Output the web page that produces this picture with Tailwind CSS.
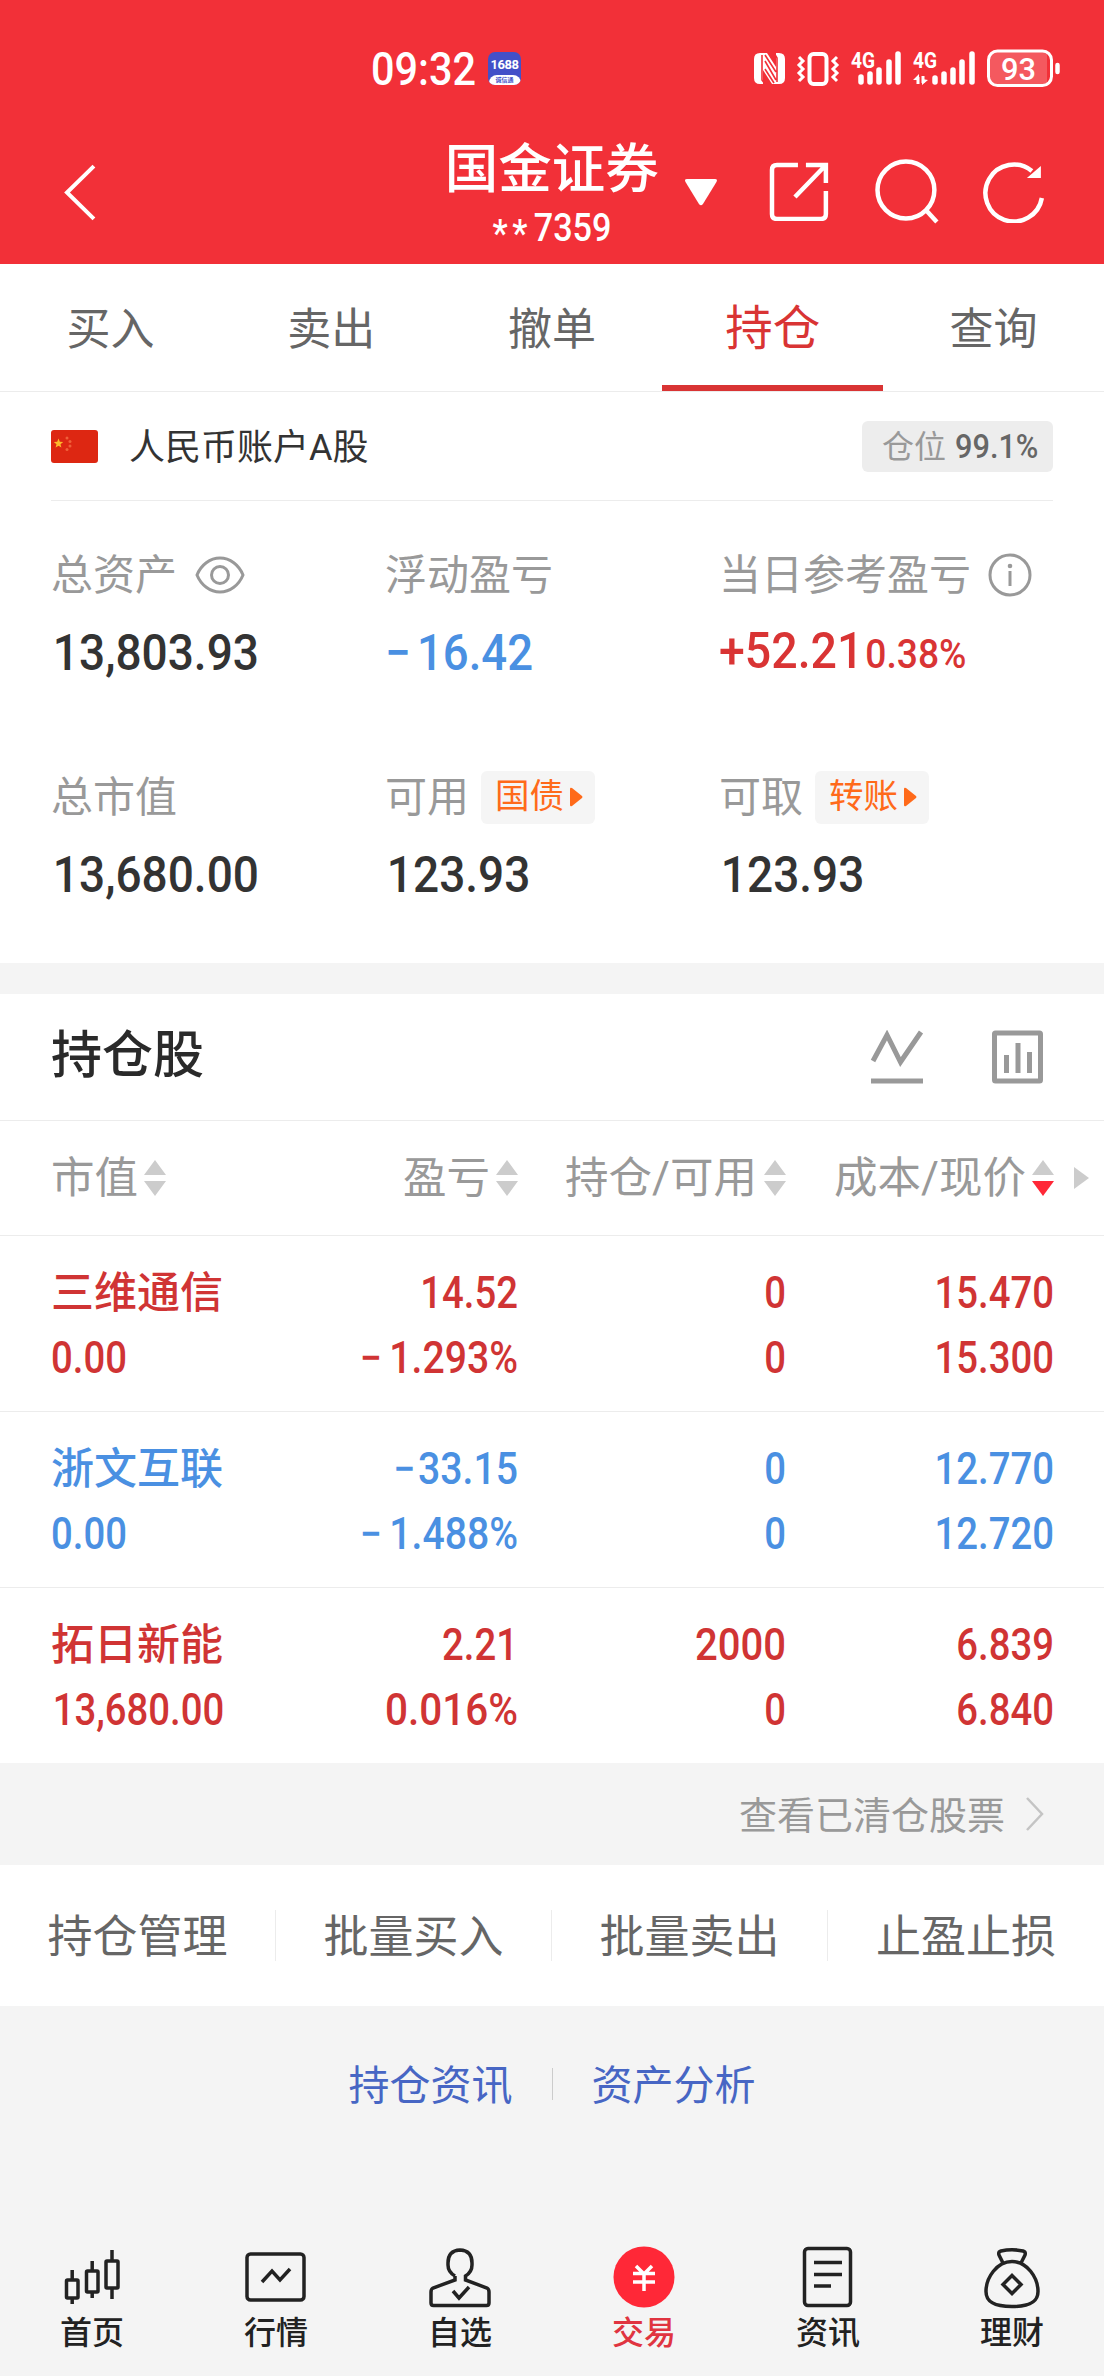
<!DOCTYPE html>
<html lang="zh-CN">
<head>
  <meta charset="UTF-8" />
  <meta name="viewport" content="width=device-width, initial-scale=1.0"/>
  <title>持仓 | 国金证券</title>
  <script src="https://cdn.jsdelivr.net/npm/@tailwindcss/browser@4"></script>
</head>
<body class="w-[1104px] h-[2376px] overflow-hidden flex flex-col bg-[#f4f4f4] font-['Roboto','Noto_Sans_CJK_SC',sans-serif] text-[#333]">

  <!-- Header -->
  <header class="h-[264px] shrink-0 bg-[#f23038] text-white">
    <div class="h-[136px] pl-[371px] pr-[44px] flex items-center">
      <span class="w-[106px] pt-[2px] text-[46px] leading-[50px] font-medium origin-left scale-x-[0.9] whitespace-nowrap">09:32</span>
      <div class="ml-[11px] w-[33px] h-[33px] rounded-[7px] overflow-hidden bg-[#4350c8] flex flex-col items-center">
        <span class="h-[23px] pt-[4px] text-[13px] leading-[18px] font-bold tracking-[-0.5px]">1688</span>
        <span class="w-[32px] h-[10px] rounded-t-[8px] bg-white text-[#4350c8] text-[6px] leading-[9px] text-center font-bold">诚信通</span>
      </div>
      <svg class="ml-auto" width="306" height="40" viewBox="754 47 306 40" fill="none" stroke="#fff">
        <!-- nfc -->
        <path d="M763 52h-3q-6 0-6 6v19q0 6 6 6h3zM776 52h3q6 0 6 6v19q0 6-6 6h-3z" fill="#fff" stroke="none"/>
        <path d="M763 52h4l9 14v17h-4l-9-14z" fill="#fff" stroke="none"/>
        <path d="M762 54v25l3 4M777 81V57l-3-5M765 60l11 19M765 68l9 14M765 54l11 17" stroke="#f23038" stroke-width="1.6"/>
        <!-- vibrate -->
        <rect x="809.5" y="53" width="17" height="30" rx="4" stroke-width="4"/>
        <path d="M799 56l4 4-4 4 4 4-4 4 4 4-4 4M837 56l-4 4 4 4-4 4 4 4-4 4 4 4" stroke-width="3"/>
        <!-- signal 1 -->
        <path d="M861 76v5M870 73v8M879 69v12M889 61v20M898 53v28" stroke-width="5.500" stroke-linecap="round"/>
        <text x="851" y="67" font-size="22" font-weight="700" fill="#fff" stroke="none" textLength="24" lengthAdjust="spacingAndGlyphs">4G</text>
        <!-- signal 2 -->
        <path d="M935 77v4M944 73v8M953 69v12M962 61v20M972 53v28" stroke-width="5.500" stroke-linecap="round"/>
        <text x="913" y="67" font-size="22" font-weight="700" fill="#fff" stroke="none" textLength="24" lengthAdjust="spacingAndGlyphs">4G</text>
        <path d="M918 83v-7M923 75v7" stroke-width="3"/>
        <path d="M913 79l6-6v6zM922 78v6l6-5z" fill="#fff" stroke="none"/>
        <!-- battery -->
        <rect x="988.5" y="50" width="63" height="34.500" rx="9" stroke-width="3"/>
        <path d="M998 51h49v32h-49q-8 0-8-8v-16q0-8 8-8z" fill="#fff" fill-opacity=".2" stroke="none"/>
        <path d="M1057.500 64v7" stroke-width="4.500" stroke-linecap="round"/>
        <text x="1001" y="79" font-size="32" font-weight="500" fill="#fff" stroke="none" textLength="35" lengthAdjust="spacingAndGlyphs">93</text>
      </svg>
    </div>

    <div class="h-[128px] pl-[62px] pr-[58px] flex items-start">
      <svg class="mt-[26px]" width="36" height="60" viewBox="0 0 36 60" fill="none" stroke="#fff" stroke-width="4"><path d="M32 4L5 30.500 32 57"/></svg>
      <div class="ml-[346px] w-[216px] flex flex-col items-center">
        <h1 class="mt-[1px] text-[53.500px] leading-[66px] font-medium whitespace-nowrap">国金证券</h1>
        <p class="mt-[5px] flex text-[38px] leading-[40px] font-medium origin-center scale-x-[0.9] whitespace-nowrap"><span class="pt-[6px] mr-[2px] tracking-[5px]">**</span>7359</p>
      </div>
      <svg class="ml-[26px] mt-[42px]" width="32" height="28" viewBox="0 0 32 28"><path d="M2 1h28q3 0 1.500 3L18 26q-2 2.500-4 0L.500 4Q-1 1 2 1z" fill="#fff"/></svg>
      <svg class="ml-[52px] mt-[25px]" width="60" height="60" viewBox="0 0 60 60" fill="none" stroke="#fff" stroke-width="4.500">
        <path d="M29 4H8q-5 0-5 5v44q0 5 5 5h44q5 0 5-5V30M37 4h20v18M57 4L26 36"/>
      </svg>
      <svg class="ml-[45px] mt-[22px]" width="66" height="66" viewBox="0 0 66 66" fill="none" stroke="#fff" stroke-width="4.500">
        <circle cx="32" cy="32" r="28.500"/><path d="M52 52l11 12"/>
      </svg>
      <svg class="ml-[42px] mt-[23px]" width="64" height="64" viewBox="0 0 64 64" fill="none" stroke="#fff" stroke-width="4.500">
        <path d="M50 12A28.500 28.500 0 1 0 60 39"/><path d="M45 19h14V7z" fill="#fff" stroke="none"/>
      </svg>
    </div>
  </header>

  <!-- Tabs -->
  <nav class="h-[128px] shrink-0 grid grid-cols-5 bg-white border-b border-[#ececec] text-[44px] leading-[132px] text-center text-[#666]">
    <a class="h-[127px]">买入</a>
    <a class="h-[127px]">卖出</a>
    <a class="h-[127px]">撤单</a>
    <a class="h-[127px] border-b-[6px] border-[#d93434] text-[47.500px] leading-[130px] text-[#d93434]">持仓</a>
    <a class="h-[127px]">查询</a>
  </nav>

  <!-- Account -->
  <section class="h-[571px] shrink-0 px-[51px] bg-white">
    <div class="h-[109px] flex items-center border-b border-[#ececec]">
      <svg width="47" height="33" viewBox="0 0 47 33">
        <rect width="47" height="33" rx="3" fill="#dd2712"/>
        <path d="M7.500 8.500l1.300 3.300 3.400.2-2.700 2.200.9 3.400-2.900-1.900-2.900 1.900.9-3.400L2.800 12l3.400-.2z" fill="#fdb92c"/>
        <g fill="#f0603a"><circle cx="16" cy="8" r="1.500"/><circle cx="19" cy="11.500" r="1.500"/><circle cx="19" cy="16" r="1.500"/><circle cx="16" cy="19.500" r="1.500"/></g>
      </svg>
      <span class="ml-[31px] pt-[3px] text-[36px] leading-[48px]">人民币账户A股</span>
      <div class="ml-auto w-[191px] h-[51px] pt-[2px] pl-[20px] rounded-[6px] bg-[#ededed] flex items-center gap-[9px] text-[32px] leading-[48px]">
        <span class="text-[#999]">仓位</span>
        <span class="text-[33px] text-[#666] font-medium origin-left scale-x-[0.93]">99.1%</span>
      </div>
    </div>

    <div class="pt-[44px] grid grid-cols-3 text-[42px] text-[#999]">
      <div class="h-[222px]">
        <div class="h-[60px] flex items-center">
          <span class="pt-[1px]">总资产</span>
          <svg class="ml-[18px]" width="50" height="38" viewBox="0 0 50 38" fill="none" stroke="#999" stroke-width="3">
            <path d="M2 19C6 9 15 2 25 2s19 7 23 17c-4 10-13 17-23 17S6 29 2 19z"/><circle cx="25" cy="19" r="8.500"/>
          </svg>
        </div>
        <p class="mt-[18px] pl-[2px] text-[50px] leading-[60px] font-medium origin-left scale-x-[0.92] text-[#333]">13,803.93</p>
      </div>
      <div class="h-[222px]">
        <div class="h-[60px] pt-[1px] flex items-center">浮动盈亏</div>
        <p class="mt-[18px] text-[50px] leading-[60px] font-medium origin-left scale-x-[0.91] text-[#4a90e2]"><span class="tracking-[7px]">−</span>16.42</p>
      </div>
      <div class="h-[222px]">
        <div class="h-[60px] flex items-center whitespace-nowrap">
          <span class="pt-[1px]">当日参考盈亏</span>
          <svg class="ml-[17px] shrink-0" width="44" height="44" viewBox="0 0 44 44" fill="none" stroke="#999" stroke-width="3">
            <circle cx="22" cy="22" r="20"/><path d="M22 18v15"/><circle cx="22" cy="13" r="2.300" fill="#999" stroke="none"/>
          </svg>
        </div>
        <p class="mt-[16px] text-[50px] leading-[60px] font-medium origin-left scale-x-[0.93] whitespace-nowrap text-[#d93434]">+52.21<span class="ml-[2px] text-[40px]">0.38%</span></p>
      </div>
      <div>
        <div class="h-[60px] pt-[1px] flex items-center">总市值</div>
        <p class="mt-[18px] pl-[2px] text-[50px] leading-[60px] font-medium origin-left scale-x-[0.92] text-[#333]">13,680.00</p>
      </div>
      <div>
        <div class="h-[60px] flex items-center">
          <span class="pt-[1px]">可用</span>
          <span class="ml-[12px] w-[114px] h-[53px] pl-[14px] rounded-[6px] bg-[#f5f5f5] flex items-center gap-[6px] text-[34.500px] text-[#ff6a1a]">国债
            <svg width="13" height="20" viewBox="0 0 13 20"><path d="M0 2Q0 0 2 1l10 8q1 1 0 2L2 19q-2 1-2-1z" fill="#ff6a1a"/></svg>
          </span>
        </div>
        <p class="mt-[18px] pl-[2px] text-[50px] leading-[60px] font-medium origin-left scale-x-[0.92] text-[#333]">123.93</p>
      </div>
      <div>
        <div class="h-[60px] flex items-center">
          <span class="pt-[1px]">可取</span>
          <span class="ml-[12px] w-[114px] h-[53px] pl-[14px] rounded-[6px] bg-[#f5f5f5] flex items-center gap-[6px] text-[34.500px] text-[#ff6a1a]">转账
            <svg width="13" height="20" viewBox="0 0 13 20"><path d="M0 2Q0 0 2 1l10 8q1 1 0 2L2 19q-2 1-2-1z" fill="#ff6a1a"/></svg>
          </span>
        </div>
        <p class="mt-[18px] pl-[2px] text-[50px] leading-[60px] font-medium origin-left scale-x-[0.92] text-[#333]">123.93</p>
      </div>
    </div>
  </section>

  <!-- Holdings -->
  <section class="mt-[31px] h-[769px] shrink-0 bg-white">
    <div class="h-[127px] pl-[51px] pr-[59px] flex items-center border-b border-[#ececec]">
      <h2 class="pb-[3px] text-[51px] leading-[66px] font-medium text-[#2a2a2a]">持仓股</h2>
      <svg class="ml-auto" width="54" height="54" viewBox="0 0 54 54" fill="none" stroke="#999" stroke-width="5">
        <path d="M3 31L17 5l13.500 27L51 2M1 51h52"/>
      </svg>
      <svg class="ml-[67px]" width="54" height="54" viewBox="0 0 54 54" fill="none" stroke="#999" stroke-width="5">
        <rect x="3.500" y="3" width="46" height="48" rx="1"/><path d="M15.500 25v18M27 13v30M38.500 22v21"/>
      </svg>
    </div>

    <div class="h-[115px] pl-[51px] pr-[15px] flex items-center border-b border-[#ececec] text-[43.500px] leading-[60px] text-[#999] whitespace-nowrap">
      <div class="w-[199px] flex items-center gap-[6px]"><span class="pt-[2px]">市值</span>
        <svg width="22" height="36" viewBox="0 0 22 36" fill="#ccc"><path d="M11 0l11 15H0zM0 21h22L11 36z"/></svg>
      </div>
      <div class="w-[268px] flex items-center justify-end gap-[6px]"><span class="pt-[2px]">盈亏</span>
        <svg width="22" height="36" viewBox="0 0 22 36" fill="#ccc"><path d="M11 0l11 15H0zM0 21h22L11 36z"/></svg>
      </div>
      <div class="w-[268px] flex items-center justify-end gap-[7px]"><span class="pt-[2px]">持仓/可用</span>
        <svg width="22" height="36" viewBox="0 0 22 36" fill="#ccc"><path d="M11 0l11 15H0zM0 21h22L11 36z"/></svg>
      </div>
      <div class="w-[268px] flex items-center justify-end gap-[6px]"><span class="pt-[2px]">成本/现价</span>
        <svg width="22" height="36" viewBox="0 0 22 36"><path d="M11 0l11 15H0z" fill="#ccc"/><path d="M0 21h22L11 36z" fill="#ff2837"/></svg>
      </div>
      <svg class="ml-auto" width="15" height="22" viewBox="0 0 15 22"><path d="M0 0l15 11L0 22z" fill="#ccc"/></svg>
    </div>

    <div class="h-[176px] pt-[25px] px-[51px] grid grid-cols-[199px_268px_268px_268px] auto-rows-[65px] border-b border-[#ececec] text-[44px] leading-[65px] font-medium text-right text-[#d03434] whitespace-nowrap">
      <span class="text-left text-[43px]">三维通信</span><span class="origin-right scale-x-[0.87]">14.52</span><span class="origin-right scale-x-[0.87]">0</span><span class="origin-right scale-x-[0.87]">15.470</span>
      <span class="text-left origin-left scale-x-[0.87]">0.00</span><span class="origin-right scale-x-[0.89]"><span class="tracking-[8px]">−</span>1.293%</span><span class="origin-right scale-x-[0.87]">0</span><span class="origin-right scale-x-[0.87]">15.300</span>
    </div>
    <div class="h-[176px] pt-[25px] px-[51px] grid grid-cols-[199px_268px_268px_268px] auto-rows-[65px] border-b border-[#ececec] text-[44px] leading-[65px] font-medium text-right text-[#4a90e2] whitespace-nowrap">
      <span class="text-left text-[43px]">浙文互联</span><span class="origin-right scale-x-[0.89]"><span class="tracking-[3px]">−</span>33.15</span><span class="origin-right scale-x-[0.87]">0</span><span class="origin-right scale-x-[0.87]">12.770</span>
      <span class="text-left origin-left scale-x-[0.87]">0.00</span><span class="origin-right scale-x-[0.89]"><span class="tracking-[8px]">−</span>1.488%</span><span class="origin-right scale-x-[0.87]">0</span><span class="origin-right scale-x-[0.87]">12.720</span>
    </div>
    <div class="h-[175px] pt-[25px] px-[51px] grid grid-cols-[199px_268px_268px_268px] auto-rows-[65px] text-[44px] leading-[65px] font-medium text-right text-[#d03434] whitespace-nowrap">
      <span class="text-left text-[43px]">拓日新能</span><span class="origin-right scale-x-[0.87]">2.21</span><span class="origin-right scale-x-[0.91]">2000</span><span class="origin-right scale-x-[0.87]">6.839</span>
      <span class="pl-[2px] text-left origin-left scale-x-[0.87]">13,680.00</span><span class="origin-right scale-x-[0.92]">0.016%</span><span class="origin-right scale-x-[0.87]">0</span><span class="origin-right scale-x-[0.87]">6.840</span>
    </div>
  </section>

  <div class="h-[102px] shrink-0 pr-[60px] flex items-center justify-end gap-[21px] text-[38px] leading-[60px] text-[#999]">
    <span class="pt-[3px]">查看已清仓股票</span>
    <svg width="18" height="34" viewBox="0 0 18 34" fill="none" stroke="#c4c4c4" stroke-width="2.500"><path d="M1 1l15 16L1 33"/></svg>
  </div>

  <!-- Batch actions -->
  <div class="h-[141px] shrink-0 bg-white grid grid-cols-4 items-center text-[45px] leading-[55px] text-center text-[#666] whitespace-nowrap">
    <a class="h-[51px] border-r border-[#ececec]">持仓管理</a>
    <a class="h-[51px] border-r border-[#ececec]">批量买入</a>
    <a class="h-[51px] border-r border-[#ececec]">批量卖出</a>
    <a class="h-[51px]">止盈止损</a>
  </div>

  <div class="mt-[48px] h-[60px] shrink-0 flex items-center justify-center gap-[39px] text-[41px] leading-[60px] text-[#4766c4]">
    <a class="pt-[3px]">持仓资讯</a>
    <i class="w-px h-[32px] bg-[#ccc]"></i>
    <a class="pt-[3px]">资产分析</a>
  </div>

  <!-- Bottom navigation -->
  <nav class="mt-auto h-[136px] shrink-0 grid grid-cols-6 text-[32px] leading-[43px] text-center text-[#222] font-medium">
    <a class="flex flex-col items-center">
      <svg width="66" height="72" viewBox="0 0 66 72" fill="none" stroke="#222" stroke-width="3.500">
        <rect x="7.500" y="40" width="11.500" height="18" rx="1"/><rect x="27.500" y="31" width="11.500" height="21" rx="1"/><rect x="47" y="21" width="12" height="27" rx="1"/>
        <path d="M13.200 30v10M13.200 58v6M33.200 21v10M33.200 52v6M53 10v11M53 48v11"/>
      </svg>首页</a>
    <a class="flex flex-col items-center">
      <svg width="66" height="72" viewBox="0 0 66 72" fill="none" stroke="#222" stroke-width="3.500">
        <rect x="4" y="14" width="57" height="46" rx="3.500"/><path d="M19 42l10-11 8 9 10-11"/>
      </svg>行情</a>
    <a class="flex flex-col items-center">
      <svg width="66" height="72" viewBox="0 0 66 72" fill="none" stroke="#222" stroke-width="3.500">
        <path d="M27 36v4L6 48q-2 1-2 4v11q0 2.500 2.500 2.500h53Q62 65.500 62 63V52q0-3-2-4l-21-8v-4q6-4 6-13 0-13-12-13.500Q21 10 21 23q0 9 6 13z" stroke="none"/>
        <path d="M28 36v4L6 48q-2 1-2 4v11q0 2.500 2.500 2.500h53Q62 65.500 62 63V52q0-3-2-4l-21.500-8v-4q6.500-4 6.500-11v-2q0-12.500-12-13Q21 10.500 21 23v2q0 7 7 11"/><path d="M26 51l6 7 10-11"/>
      </svg>自选</a>
    <a class="flex flex-col items-center text-[#e03440]">
      <svg width="66" height="72" viewBox="0 0 66 72" fill="none" stroke="#fff" stroke-width="3.500">
        <circle cx="33" cy="37" r="30.500" fill="#ff2837" stroke="none"/>
        <path d="M25 26l8 8 8-8M22 33.500h22M22 42h22M33 33v18"/>
      </svg>交易</a>
    <a class="flex flex-col items-center">
      <svg width="66" height="72" viewBox="0 0 66 72" fill="none" stroke="#222" stroke-width="3.500">
        <rect x="9.500" y="8.500" width="46" height="57" rx="3.500"/><path d="M19 22.500h28M19 34.500h28M19 46h17"/>
      </svg>资讯</a>
    <a class="flex flex-col items-center">
      <svg width="66" height="72" viewBox="0 0 66 72" fill="none" stroke="#222" stroke-width="3.500">
        <path d="M33 21.500c-15 0-26 16-26 30 0 11 9 15 26 15s26-4 26-15c0-14-11-30-26-30z"/>
        <path d="M24 23l-4-8q-1-3 2-4 11-2.500 22 0 3 1 2 4l-4 8M33 35.500l9 9-9 9-9-9z"/>
      </svg>理财</a>
  </nav>
</body>
</html>
